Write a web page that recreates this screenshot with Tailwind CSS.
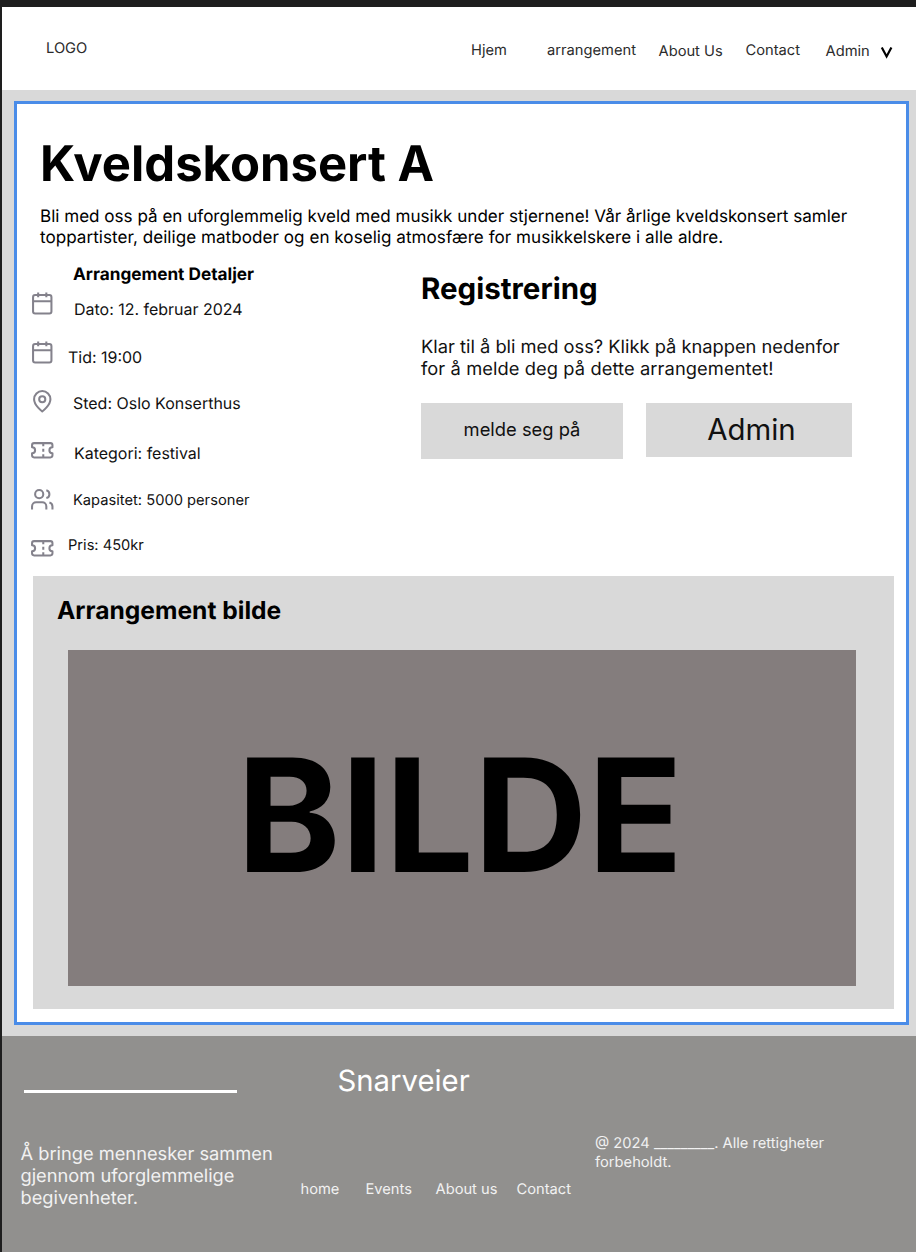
<!DOCTYPE html>
<html lang="no">
<head>
<meta charset="utf-8">
<title>Kveldskonsert A</title>
<script src="https://cdn.jsdelivr.net/npm/@tailwindcss/browser@4"></script>
</head>
<body class="w-[916px] h-[1252px] overflow-hidden bg-[#d9d9d9] font-['Inter',sans-serif] [text-rendering:geometricPrecision] text-black border-l-2 border-t-[7px] border-[#1e1e1e]">
<div class="flex flex-col h-[1245px] w-[914px]">
  <header class="flex items-start h-[83px] shrink-0 bg-white pl-11 text-[14.7px] leading-5 text-[#2b2b2b] whitespace-nowrap">
    <div class="w-[425px] pt-[31px]">LOGO</div>
    <nav class="flex items-start">
      <a class="w-[76px] pt-[33px]">Hjem</a>
      <a class="w-[111.5px] pt-[33px]">arrangement</a>
      <a class="w-[87px] pt-[34px]">About Us</a>
      <a class="w-[80px] pt-[33px]">Contact</a>
      <a class="w-[54.5px] pt-[34px]">Admin</a>
      <svg class="mt-[39px] size-[13px]" viewBox="0 0 13 13" fill="none" stroke="#000" stroke-width="2.2"><path d="M1.8 1.4 L6.6 10.4 L11.4 1.4"/></svg>
    </nav>
  </header>

  <main class="flex flex-col mt-[11px] ml-3 w-[895px] h-[924px] shrink-0 border-3 border-[#4a8ce8] bg-white">
    <h1 class="mt-[30px] ml-[23px] h-[60px] text-[49px] leading-[60px] font-bold whitespace-nowrap">Kveldskonsert A</h1>
    <p class="mt-3 mb-[-1px] ml-[23px] text-[17.07px] leading-[21px] whitespace-nowrap">Bli med oss på en uforglemmelig kveld med musikk under stjernene! Vår årlige kveldskonsert samler<br><span class="tracking-[.04px]">toppartister, deilige matboder og en koselig atmosfære for musikkelskere i alle aldre.</span></p>

    <div class="flex h-[329px] shrink-0">
      <div class="flex flex-col gap-[24.5px] pt-[44px] pl-[13px] text-[#84828c]">
        <svg class="size-[24.5px] shrink-0" viewBox="0 0 24 24" fill="none" stroke="currentColor" stroke-width="2" stroke-linejoin="round"><rect x="3" y="4" width="18" height="18" rx="2"/><path d="M8 1.4V6M16 1.4V6M3 10h18"/></svg>
        <svg class="size-[24.5px] shrink-0" viewBox="0 0 24 24" fill="none" stroke="currentColor" stroke-width="2" stroke-linejoin="round"><rect x="3" y="4" width="18" height="18" rx="2"/><path d="M8 1.4V6M16 1.4V6M3 10h18"/></svg>
        <svg class="size-[24.5px] shrink-0" viewBox="0 0 24 24" fill="none" stroke="currentColor" stroke-width="2" stroke-linejoin="round"><path d="M20 10c0 6-8 12-8 12s-8-6-8-12a8 8 0 0 1 16 0Z"/><circle cx="12" cy="10" r="3"/></svg>
        <svg class="size-[24.5px] shrink-0" viewBox="0 0 24 24" fill="none" stroke="currentColor" stroke-width="2" stroke-linejoin="round"><path d="M2 9a3 3 0 0 1 0 6v2a2 2 0 0 0 2 2h16a2 2 0 0 0 2-2v-2a3 3 0 0 1 0-6V7a2 2 0 0 0-2-2H4a2 2 0 0 0-2 2ZM13 5v3M13 10.5v3M13 16v3"/></svg>
        <svg class="size-[24.5px] shrink-0" viewBox="0 0 24 24" fill="none" stroke="currentColor" stroke-width="2" stroke-linejoin="round"><path d="M16 22v-3a4 4 0 0 0-4-4H6a4 4 0 0 0-4 4v3M22 22v-3a4 4 0 0 0-3-3.87M16 3.13a4 4 0 0 1 0 7.75"/><circle cx="9" cy="7" r="4"/></svg>
        <svg class="size-[24.5px] shrink-0" viewBox="0 0 24 24" fill="none" stroke="currentColor" stroke-width="2" stroke-linejoin="round"><path d="M2 9a3 3 0 0 1 0 6v2a2 2 0 0 0 2 2h16a2 2 0 0 0 2-2v-2a3 3 0 0 1 0-6V7a2 2 0 0 0-2-2H4a2 2 0 0 0-2 2ZM13 5v3M13 10.5v3M13 16v3"/></svg>
      </div>
      <div class="flex flex-col w-[366px] pl-[13.5px] text-[15.97px] leading-6 text-[#111] whitespace-nowrap">
        <h2 class="mt-4 pl-[5px] text-[17.2px] font-bold text-black">Arrangement Detaljer</h2>
        <p class="mt-[11px] pl-[6px]">Dato: 12. februar 2024</p>
        <p class="mt-6">Tid: 19:00</p>
        <p class="mt-[22px] pl-[5px]">Sted: Oslo Konserthus</p>
        <p class="mt-[26px] pl-[6px]">Kategori: festival</p>
        <p class="mt-[22px] pl-[5px] text-[14.7px]">Kapasitet: 5000 personer</p>
        <p class="mt-[21px] text-[14.65px]">Pris: 450kr</p>
      </div>
      <section class="flex flex-col pt-[22px] pl-[.5px]">
        <h2 class="h-10 text-[29.5px] leading-10 font-bold">Registrering</h2>
        <p class="mt-[27px] text-[18.3px] leading-[22px] text-[#111] whitespace-nowrap">Klar til å bli med oss? Klikk på knappen nedenfor<br><span class="tracking-[.09px]">for å melde deg på dette arrangementet!</span></p>
        <div class="flex items-start mt-[23px] gap-[23px]">
          <button class="w-[202px] h-14 pb-[4px] bg-[#d9d9d9] text-[18.35px] leading-[22px] text-[#111]">melde seg på</button>
          <button class="w-[206px] h-[54px] pl-[5px] bg-[#d9d9d9] text-[29.4px] leading-9 text-[#111]">Admin</button>
        </div>
      </section>
    </div>

    <section class="flex flex-col ml-[15.7px] w-[861.3px] h-[432.5px] shrink-0 bg-[#d9d9d9]">
      <h2 class="mt-[18px] ml-[24.3px] h-8 text-[24.6px] leading-8 font-bold">Arrangement bilde</h2>
      <div class="mt-[23.7px] ml-[35.3px] flex w-[788px] h-[336px] shrink-0 bg-[#847d7d] pt-[65px] pl-[168.7px] text-[157.3px] leading-[200px] font-bold">BILDE</div>
    </section>
  </main>

  <footer class="flex mt-[10.5px] flex-1 bg-[#91908e] text-[#f2f2f2] whitespace-nowrap">
    <div class="w-[298.5px] pl-[18.5px]">
      <div class="mt-[54px] ml-[3.5px] w-[213px] h-[3px] bg-white"></div>
      <p class="mt-[50px] text-[18.25px] leading-[22px]">Å bringe mennesker sammen<br>gjennom uforglemmelige<br>begivenheter.</p>
    </div>
    <div class="w-[294.5px]">
      <h2 class="mt-[26px] ml-[37px] h-10 text-[29.3px] leading-10 text-white">Snarveier</h2>
      <nav class="mt-[77px] flex text-[14.7px] leading-5">
        <a class="w-[65px]">home</a>
        <a class="w-[70px]">Events</a>
        <a class="w-[81px]">About us</a>
        <a>Contact</a>
      </nav>
    </div>
    <p class="pt-[98.5px] text-[14.7px] leading-[18.5px]">@ 2024 _________. Alle rettigheter<br>forbeholdt.</p>
  </footer>
</div>
</body>
</html>
